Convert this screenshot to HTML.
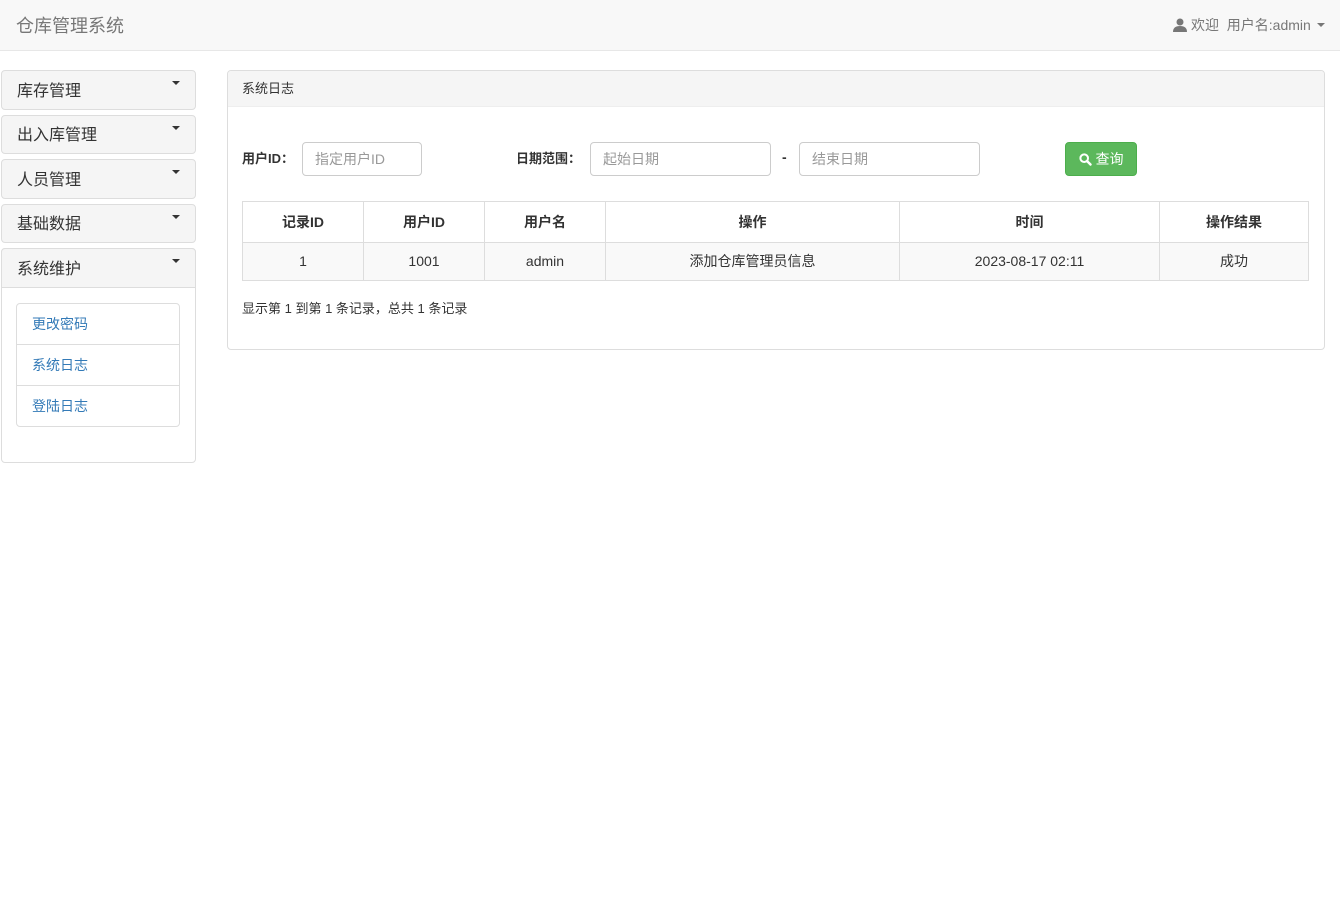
<!DOCTYPE html><html><head><meta charset="utf-8"><style>
*{box-sizing:border-box;margin:0;padding:0}
body{width:1340px;height:914px;background:#fff;font-family:"Liberation Sans","Noto Sans CJK SC",sans-serif;font-size:14px;color:#333;position:relative;overflow:hidden}
.a{position:absolute}
.nav{left:0;top:0;width:1340px;height:51px;background:#f8f8f8;border-bottom:1px solid #e7e7e7}
.ph{left:1px;width:195px;background:#f5f5f5;border:1px solid #ddd;border-radius:4px;font-size:16px;padding-left:15px;display:flex;align-items:center;padding-bottom:3px}
.caret{position:absolute;right:15px;top:10px;width:0;height:0;border-left:4px solid transparent;border-right:4px solid transparent;border-top:4px solid #333}
.li{left:16px;width:164px;height:42px;border:1px solid #ddd;padding-left:15px;display:flex;align-items:center;color:#337ab7;font-size:14px}
.inp{height:34px;border:1px solid #ccc;border-radius:4px;padding-left:12px;display:flex;align-items:center;color:#999;font-size:14px}
table{border-collapse:collapse;font-size:14px}
td,th{border:1px solid #ddd;text-align:center}
th{height:41px;font-weight:bold}
td{height:38px;background:#f9f9f9;padding-bottom:2px}
</style></head><body>
<div class="a nav"></div>
<div class="a" style="left:16px;top:12px;font-size:18px;color:#777">仓库管理系统</div>
<div class="a" style="left:1173px;top:15px;color:#777;font-size:14px;display:flex;align-items:center">
<svg width="14" height="14" viewBox="0 0 14 14"><circle cx="7" cy="4" r="3.5" fill="#777"/><path d="M0 14 Q0 8 7 8 Q14 8 14 14Z" fill="#777"/></svg>
<span style="margin-left:4px">欢迎&nbsp; 用户名:admin</span>
<span style="display:inline-block;margin-left:6px;border-left:4px solid transparent;border-right:4px solid transparent;border-top:4px solid #777"></span></div>

<div class="a ph" style="top:70px;height:40px">库存管理<span class="caret"></span></div>
<div class="a ph" style="top:115px;height:39px">出入库管理<span class="caret"></span></div>
<div class="a ph" style="top:159px;height:40px">人员管理<span class="caret"></span></div>
<div class="a ph" style="top:204px;height:39px">基础数据<span class="caret"></span></div>
<div class="a" style="left:1px;top:248px;width:195px;height:215px;border:1px solid #ddd;border-radius:4px"></div>
<div class="a ph" style="top:248px;height:40px;border-radius:4px 4px 0 0">系统维护<span class="caret"></span></div>
<div class="a li" style="top:303px;border-radius:4px 4px 0 0">更改密码</div>
<div class="a li" style="top:344px">系统日志</div>
<div class="a li" style="top:385px;border-radius:0 0 4px 4px">登陆日志</div>

<div class="a" style="left:227px;top:70px;width:1098px;height:280px;border:1px solid #ddd;border-radius:4px;overflow:hidden">
<div style="height:36px;background:#f5f5f5;border-bottom:1px solid #eee;padding-left:14px;line-height:36px;font-size:13px">系统日志</div></div>
<div class="a" style="left:242px;top:148px;font-weight:bold;font-size:13px">用户ID：</div>
<div class="a inp" style="left:302px;top:142px;width:120px">指定用户ID</div>
<div class="a" style="left:516px;top:148px;font-weight:bold;font-size:13px">日期范围：</div>
<div class="a inp" style="left:590px;top:142px;width:181px">起始日期</div>
<div class="a" style="left:782px;top:149px;font-weight:bold">-</div>
<div class="a inp" style="left:799px;top:142px;width:181px">结束日期</div>
<div class="a" style="left:1065px;top:142px;width:72px;height:34px;background:#5cb85c;border:1px solid #4cae4c;border-radius:4px;color:#fff;display:flex;align-items:center;justify-content:center;font-size:14px">
<svg width="13" height="13" viewBox="0 0 13 13" style="margin-right:4px"><circle cx="5.2" cy="5.2" r="3.8" fill="none" stroke="#fff" stroke-width="2"/><path d="M8 8 L11.5 11.5" stroke="#fff" stroke-width="2.4" stroke-linecap="round"/></svg>查询</div>
<table class="a" style="left:242px;top:201px;width:1067px">
<tr><th style="width:121px">记录ID</th><th style="width:121px">用户ID</th><th style="width:121px">用户名</th><th style="width:294px">操作</th><th style="width:260px">时间</th><th>操作结果</th></tr>
<tr><td>1</td><td>1001</td><td>admin</td><td>添加仓库管理员信息</td><td>2023-08-17 02:11</td><td>成功</td></tr></table>
<div class="a" style="left:242px;top:298px;font-size:13px">显示第 1 到第 1 条记录，总共 1 条记录</div>
</body></html>
